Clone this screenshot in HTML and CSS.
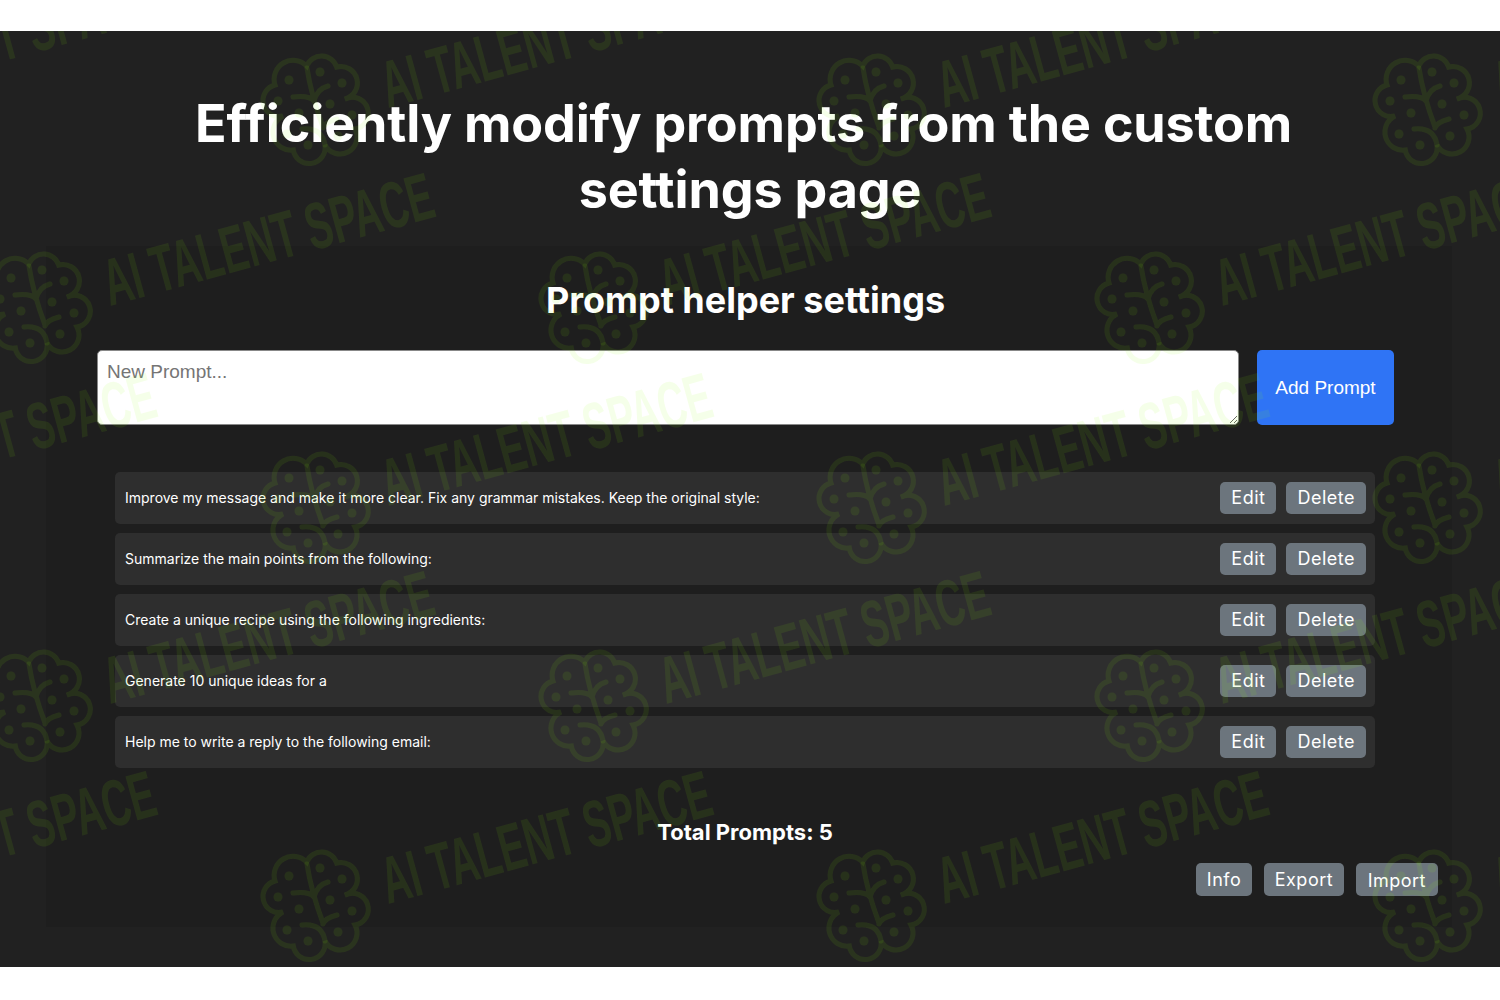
FILE: index.html
```html
<!DOCTYPE html>
<html lang="en">

<head>
    <meta charset="UTF-8">
    <meta name="viewport" content="width=device-width, initial-scale=1.0">
    <title>Prompt helper settings</title>
    <link rel="stylesheet" href="styles.css">
</head>

<body>
    <main class="page">
        <h1 class="title"><span class="title-first">Efficiently modify prompts from the custom</span> settings page</h1>

        <section class="panel">
            <h2 class="panel-title">Prompt helper settings</h2>

            <form class="new-prompt">
                <textarea class="new-prompt-input" placeholder="New Prompt..."></textarea>
                <button type="button" class="add-button">Add Prompt</button>
            </form>

            <ul class="prompt-list">
                <li class="prompt-row">
                    <span class="prompt-text">Improve my message and make it more clear. Fix any grammar mistakes. Keep the original style:</span>
                    <button type="button" class="button">Edit</button>
                    <button type="button" class="button">Delete</button>
                </li>
                <li class="prompt-row">
                    <span class="prompt-text">Summarize the main points from the following:</span>
                    <button type="button" class="button">Edit</button>
                    <button type="button" class="button">Delete</button>
                </li>
                <li class="prompt-row">
                    <span class="prompt-text">Create a unique recipe using the following ingredients:</span>
                    <button type="button" class="button">Edit</button>
                    <button type="button" class="button">Delete</button>
                </li>
                <li class="prompt-row">
                    <span class="prompt-text">Generate 10 unique ideas for a</span>
                    <button type="button" class="button">Edit</button>
                    <button type="button" class="button">Delete</button>
                </li>
                <li class="prompt-row">
                    <span class="prompt-text">Help me to write a reply to the following email:</span>
                    <button type="button" class="button">Edit</button>
                    <button type="button" class="button">Delete</button>
                </li>
            </ul>

            <p class="total">Total Prompts: 5</p>

            <div class="panel-actions">
                <button type="button" class="button">Info</button>
                <button type="button" class="button">Export</button>
                <button type="button" class="button button-import">Import</button>
            </div>
        </section>

        <!-- watermark lies over everything -->
        <svg class="watermark" width="1500" height="936" aria-hidden="true">
            <defs>
                <g id="mark">
                    <path class="mark-line" d="M-8.3 -41A16 16 0 0 1 21.7 -40A16.5 16.5 0 0 1 30 -8A16 16 0 1 1 40 22A17 17 0 0 1 10 38A16 16 0 0 1 -21.7 43A18 18 0 0 1 -32 9A16 16 0 1 1 -40 -22A19 19 0 0 1 -8.3 -41Z" />
                    <path class="mark-line" d="M-8 -39Q-4 -12 8 20M-22 -10Q-6 -12 -1 -6M-1 -6Q2 -18 13 -21M-13 22Q7 20 10 38M8 21Q10 15 22 12" />
                    <g class="mark-dots">
                        <circle cx="5" cy="-35" r="4.5" />
                        <circle cx="27" cy="-24" r="4.5" />
                        <circle cx="37" cy="8" r="4.5" />
                        <circle cx="23" cy="29" r="4.5" />
                        <circle cx="-7" cy="38" r="4.5" />
                        <circle cx="-28" cy="27" r="4.5" />
                        <circle cx="-37" cy="-6" r="4.5" />
                        <circle cx="-26" cy="-27" r="4.5" />
                        <circle cx="-16" cy="6" r="4.5" />
                        <circle cx="15" cy="-3" r="4.5" />
                    </g>
                    <text class="mark-text" transform="translate(73 1) rotate(-15.3)" textLength="340" lengthAdjust="spacingAndGlyphs">AI TALENT SPACE</text>
                </g>
                <pattern id="marks" patternUnits="userSpaceOnUse" x="0" y="-60" width="556" height="398">
                    <use href="#mark" x="315" y="136" />
                    <use href="#mark" x="-241" y="136" />
                    <use href="#mark" x="37" y="334" />
                    <use href="#mark" x="593" y="334" />
                </pattern>
            </defs>
            <rect width="1500" height="936" fill="url(#marks)" />
        </svg>
    </main>
</body>

</html>
```
FILE: styles.css
```css
* {
    box-sizing: border-box;
}

body {
    margin: 0;
    background-color: #fff;
    font-family: Inter, "Liberation Sans", sans-serif;
    color: #fff;
}

.page {
    position: relative;
    margin-top: 31px;
    height: 936px;
    padding-top: 60px;
    background-color: #212121;
    overflow: hidden;
}

.title {
    margin: 0;
    font-size: 52px;
    line-height: 66px;
    font-weight: 700;
    letter-spacing: -0.15px;
    text-align: center;
}

.title-first {
    display: block;
    margin-right: 13px;
}

.panel {
    display: flex;
    flex-direction: column;
    height: 681px;
    margin: 23px 48px 0 46px;
    padding: 32px 14px 0 0;
    background-color: #1e1e1e;
}

.panel-title {
    margin: 0 0 28px;
    padding-left: 7px;
    font-size: 36px;
    line-height: 44px;
    font-weight: 700;
    text-align: center;
}

.new-prompt {
    display: flex;
    gap: 18px;
    height: 75px;
    margin: 0 44px 0 51px;
}

.new-prompt-input {
    flex: 1;
    padding: 10px 9px;
    border: 1px solid #888;
    border-radius: 5px;
    background-color: #fff;
    font-family: "Liberation Sans", sans-serif;
    font-size: 19px;
}

.new-prompt-input::placeholder {
    color: #757575;
}

.add-button {
    width: 137px;
    border: none;
    border-radius: 5px;
    background-color: #2f74f5;
    color: #fff;
    font-family: "Liberation Sans", sans-serif;
    font-size: 19px;
}

.prompt-list {
    display: flex;
    flex-direction: column;
    gap: 9.5px;
    margin: 47px 63px 0 69px;
    padding: 0;
    list-style: none;
}

.prompt-row {
    display: flex;
    align-items: center;
    gap: 10px;
    height: 51.5px;
    padding: 0 9px 0 10px;
    border-radius: 5px;
    background-color: #2e2e2e;
}

.prompt-text {
    flex: 1;
    font-size: 14px;
}

.button {
    height: 32px;
    padding: 0 11px;
    border: none;
    border-radius: 5px;
    background-color: #6c757d;
    color: #fff;
    font-family: Inter, "Liberation Sans", sans-serif;
    font-size: 18px;
    letter-spacing: 0.5px;
}

.total {
    margin: 50px 0 0;
    padding-left: 6px;
    font-size: 22px;
    line-height: 28px;
    font-weight: 700;
    text-align: center;
}

.panel-actions {
    display: flex;
    justify-content: flex-end;
    gap: 11.5px;
    margin-top: 17px;
}

.panel-actions .button {
    height: 33px;
}

.panel-actions .button-import {
    padding: 2px 12px 0;
}

.watermark {
    position: absolute;
    top: 0;
    left: 0;
    pointer-events: none;
}

.mark-line {
    fill: none;
    stroke: rgb(137, 255, 0);
    stroke-opacity: 0.085;
    stroke-width: 5;
    stroke-linecap: round;
}

.mark-dots {
    fill: rgb(137, 255, 0);
    fill-opacity: 0.085;
}

.mark-text {
    fill: rgb(137, 255, 0);
    fill-opacity: 0.085;
    font-family: "Liberation Sans Narrow", "Liberation Sans", sans-serif;
    font-size: 66px;
    font-weight: 700;
}
```
